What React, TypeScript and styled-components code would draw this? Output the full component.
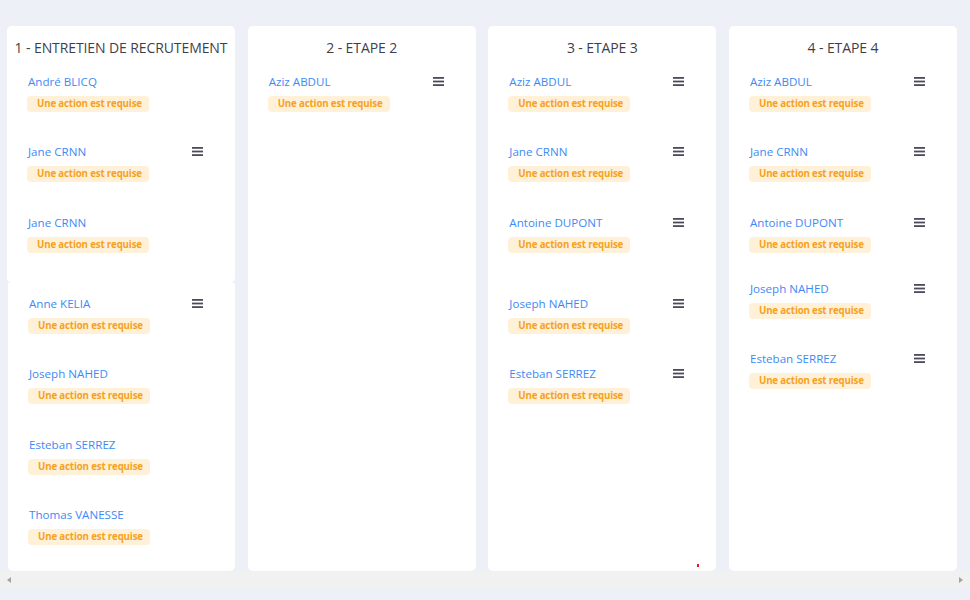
import React from "react";
import styled, { createGlobalStyle } from "styled-components";

const Global = createGlobalStyle`
  html, body { margin: 0; padding: 0; background: #edf0f7; }
  body { width: 970px; height: 600px; overflow: hidden; font-family: "Open Sans", "Liberation Sans", sans-serif; }
`;

const Page = styled.div`
  width: 970px;
  height: 600px;
  display: flex;
  flex-direction: column;
`;

const Board = styled.div`
  display: flex;
  gap: 12.67px;
  padding: 26px 0 0 7px;
  height: 545px;
  box-sizing: content-box;
`;

const Column = styled.div`
  width: 228px;
  height: 545px;
  flex: none;
  display: flex;
  flex-direction: column;
  position: relative;
`;

const Panel = styled.div<{ $shift?: number; $grow?: boolean; $padTop?: number; $h?: number }>`
  background: #ffffff;
  border-radius: ${(p) => (p.$grow ? "0 0 5px 5px" : "5px")};
  margin-left: ${(p) => p.$shift ?? 0}px;
  padding-top: ${(p) => p.$padTop ?? 0}px;
  flex: ${(p) => (p.$grow ? "1 1 0" : "none")};
  ${(p) => (p.$h ? `height: ${p.$h}px;` : "")}
  min-height: 0;
  overflow: hidden;
  box-sizing: border-box;
  display: flow-root;
`;

const FullPanel = styled(Panel)`
  flex: 1 1 0;
  border-radius: 5px;
`;

const Heading = styled.div`
  height: 20px;
  line-height: 20px;
  margin: 12px 0 15px;
  text-align: center;
  font-family: "Open Sans", "Liberation Sans", sans-serif;
  font-size: 14px;
  color: #3f3f4c;
  letter-spacing: -0.1px;
  white-space: nowrap;
`;

const Item = styled.div<{ $shift?: number }>`
  height: 70.5px;
  margin-top: ${(p) => p.$shift ?? 0}px;
  padding: 0 20px;
  display: flex;
  flex-direction: column;
  align-items: flex-start;
  position: relative;
  box-sizing: border-box;
`;

const NameRow = styled.div`
  width: 100%;
  height: 16px;
  display: flex;
  align-items: center;
  justify-content: space-between;
  margin: 0.5px 0 6px;
`;

const Name = styled.span`
  padding-left: 1px;
  font-family: "Open Sans", "Liberation Sans", sans-serif;
  font-size: 11.6px;
  line-height: 16px;
  color: #3e8af5;
`;

const Badge = styled.span`
  display: inline-block;
  height: 16px;
  line-height: 16px;
  padding: 0 7px 0 10px;
  border-radius: 4px;
  background: #fff1d8;
  color: #f6a11f;
  font-family: "Open Sans", "Liberation Sans", sans-serif;
  font-weight: 700;
  font-size: 9.7px;
  letter-spacing: -0.15px;
  white-space: nowrap;
`;

const MenuButton = styled.span`
  display: flex;
  margin-right: 12px;
  margin-top: -1px;
  width: 11px;
  height: 9px;
`;

const Dot = styled.span`
  position: absolute;
  left: 209px;
  bottom: 4px;
  width: 2px;
  height: 3px;
  background: #e02020;
`;

const ScrollBar = styled.div`
  margin-top: 1px;
  height: 15px;
  background: #f1f1f1;
  display: flex;
  align-items: center;
  justify-content: space-between;
  padding: 0 7px;
`;

const Arrow = styled.span<{ $dir: "left" | "right" }>`
  width: 0;
  height: 0;
  border-top: 3.5px solid transparent;
  border-bottom: 3.5px solid transparent;
  ${(p) =>
    p.$dir === "left"
      ? "border-right: 4px solid #a3a3a3;"
      : "border-left: 4px solid #a3a3a3;"}
`;

const MenuIcon = () => (
  <MenuButton>
    <svg width="11" height="9" viewBox="0 0 11 9">
      <rect x="0" y="0" width="11" height="1.8" fill="#4b4b5a" />
      <rect x="0" y="3.6" width="11" height="1.8" fill="#4b4b5a" />
      <rect x="0" y="7.2" width="11" height="1.8" fill="#4b4b5a" />
    </svg>
  </MenuButton>
);

type Cand = { name: string; menu?: boolean; shift?: number };

const Card = ({ c }: { c: Cand }) => (
  <Item $shift={c.shift}>
    <NameRow>
      <Name>{c.name}</Name>
      {c.menu && <MenuIcon />}
    </NameRow>
    <Badge>Une action est requise</Badge>
  </Item>
);

const col1a: Cand[] = [
  { name: "André BLICQ" },
  { name: "Jane CRNN", menu: true },
  { name: "Jane CRNN" },
];
const col1b: Cand[] = [
  { name: "Anne KELIA", menu: true },
  { name: "Joseph NAHED" },
  { name: "Esteban SERREZ" },
  { name: "Thomas VANESSE" },
];
const col2: Cand[] = [{ name: "Aziz ABDUL", menu: true }];
const col3: Cand[] = [
  { name: "Aziz ABDUL", menu: true },
  { name: "Jane CRNN", menu: true },
  { name: "Antoine DUPONT", menu: true },
  { name: "Joseph NAHED", menu: true, shift: 10.5 },
  { name: "Esteban SERREZ", menu: true },
];
const col4: Cand[] = [
  { name: "Aziz ABDUL", menu: true },
  { name: "Jane CRNN", menu: true },
  { name: "Antoine DUPONT", menu: true },
  { name: "Joseph NAHED", menu: true, shift: -4.5 },
  { name: "Esteban SERREZ", menu: true },
];

export default function App() {
  return (
    <Page>
      <Global />
      <Board>
        <Column>
          <Panel $h={257}>
            <Heading>1 - ENTRETIEN DE RECRUTEMENT</Heading>
            {col1a.map((c, i) => (
              <Card key={i} c={c} />
            ))}
          </Panel>
          <Panel $shift={1} $grow $padTop={12}>
            {col1b.map((c, i) => (
              <Card key={i} c={c} />
            ))}
          </Panel>
        </Column>
        <Column>
          <FullPanel>
            <Heading>2 - ETAPE 2</Heading>
            {col2.map((c, i) => (
              <Card key={i} c={c} />
            ))}
          </FullPanel>
        </Column>
        <Column>
          <FullPanel>
            <Heading>3 - ETAPE 3</Heading>
            {col3.map((c, i) => (
              <Card key={i} c={c} />
            ))}
          </FullPanel>
          <Dot />
        </Column>
        <Column>
          <FullPanel>
            <Heading>4 - ETAPE 4</Heading>
            {col4.map((c, i) => (
              <Card key={i} c={c} />
            ))}
          </FullPanel>
        </Column>
      </Board>
      <ScrollBar>
        <Arrow $dir="left" />
        <Arrow $dir="right" />
      </ScrollBar>
    </Page>
  );
}
